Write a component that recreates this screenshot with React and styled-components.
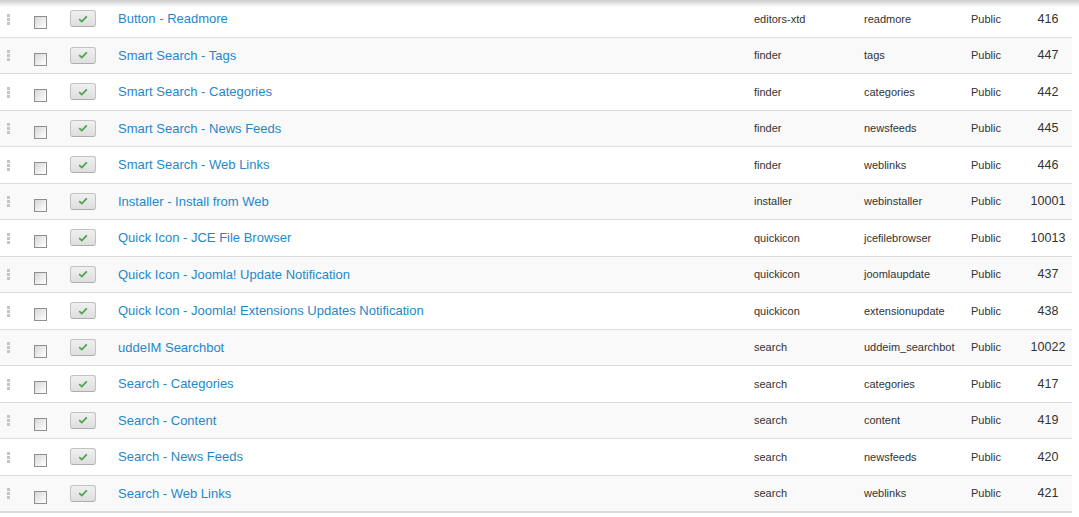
import styled, { createGlobalStyle } from "styled-components";

const GlobalStyle = createGlobalStyle`
  html, body {
    margin: 0;
    padding: 0;
    background: #fff;
    font-family: "Liberation Sans", Arial, sans-serif;
  }
`;

const plugins = [
  ["Button - Readmore", "editors-xtd", "readmore", 416],
  ["Smart Search - Tags", "finder", "tags", 447],
  ["Smart Search - Categories", "finder", "categories", 442],
  ["Smart Search - News Feeds", "finder", "newsfeeds", 445],
  ["Smart Search - Web Links", "finder", "weblinks", 446],
  ["Installer - Install from Web", "installer", "webinstaller", 10001],
  ["Quick Icon - JCE File Browser", "quickicon", "jcefilebrowser", 10013],
  ["Quick Icon - Joomla! Update Notification", "quickicon", "joomlaupdate", 437],
  ["Quick Icon - Joomla! Extensions Updates Notification", "quickicon", "extensionupdate", 438],
  ["uddeIM Searchbot", "search", "uddeim_searchbot", 10022],
  ["Search - Categories", "search", "categories", 417],
  ["Search - Content", "search", "content", 419],
  ["Search - News Feeds", "search", "newsfeeds", 420],
  ["Search - Web Links", "search", "weblinks", 421],
];

const App = () => {
  return (
    <Page>
      <GlobalStyle />
      <TopShadow />
      <List>
        {plugins.map(([title, folder, element, id], i) => (
          <Row key={id} $striped={i % 2 === 1}>
            <Handle>
              <span />
              <span />
              <span />
            </Handle>
            <CheckCell>
              <Checkbox />
            </CheckCell>
            <StatusCell>
              <StatusButton>
                <svg width="10" height="8" viewBox="0 0 10 8">
                  <path d="M1.2 4.2 L3.8 6.6 L8.8 1.4" fill="none" stroke="#4fa24f" strokeWidth="1.8" />
                </svg>
              </StatusButton>
            </StatusCell>
            <Title href="#">{title}</Title>
            <Small>{folder}</Small>
            <Small>{element}</Small>
            <Small>Public</Small>
            <Id>{id}</Id>
          </Row>
        ))}
      </List>
    </Page>
  );
};

const Page = styled.div`
  position: relative;
  width: 1079px;
  height: 517px;
  overflow: hidden;
  padding-top: 1px;
  box-sizing: border-box;
`;

const TopShadow = styled.div`
  position: absolute;
  top: 0;
  left: 0;
  right: 0;
  height: 7px;
  background: linear-gradient(to bottom, rgba(0, 0, 0, 0.2), rgba(0, 0, 0, 0));
  z-index: 2;
`;

const List = styled.div`
  width: 1072px;
  border-bottom: 1px solid #ddd;
`;

const Row = styled.div`
  display: grid;
  grid-template-columns: 27px 33px 50px 636px 110px 107px 61px 48px;
  align-items: center;
  height: 36.5px;
  box-sizing: border-box;
  border-bottom: 1px solid #ddd;
  background: ${(p) => (p.$striped ? "#f9f9f9" : "#fff")};
`;

const Handle = styled.div`
  display: flex;
  flex-direction: column;
  gap: 1px;
  padding-left: 7px;
  margin-top: 1px;

  span {
    width: 3px;
    height: 3px;
    background: #c4c4c4;
  }
`;

const CheckCell = styled.div`
  padding-left: 7px;
  display: flex;
  margin-top: 8px;
`;

const Checkbox = styled.div`
  width: 13px;
  height: 13px;
  box-sizing: border-box;
  border: 1px solid #8f8f8f;
  background: linear-gradient(135deg, #d6d6d6, #f4f4f4 70%, #fff);
`;

const StatusCell = styled.div`
  padding-left: 10px;
  display: flex;
`;

const StatusButton = styled.div`
  width: 26px;
  height: 17px;
  box-sizing: border-box;
  border: 1px solid #c2c2c2;
  border-bottom-color: #adadad;
  border-radius: 3px;
  background: linear-gradient(to bottom, #f0f0f0, #dedede);
  display: flex;
  align-items: center;
  justify-content: center;
`;

const Title = styled.a`
  padding-left: 8px;
  font-size: 13px;
  color: #1f88c9;
  text-decoration: none;
  white-space: nowrap;
`;

const Small = styled.div`
  padding-left: 8px;
  font-size: 11px;
  color: #333;
  white-space: nowrap;
`;

const Id = styled.div`
  text-align: center;
  font-size: 12.5px;
  color: #333;
`;

export default App;
